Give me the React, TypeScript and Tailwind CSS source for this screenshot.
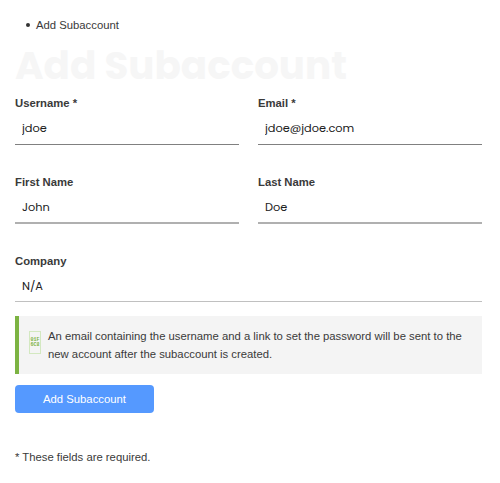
type FieldProps = {
  id: string;
  label: string;
  value: string;
  type?: string;
  className?: string;
};

const inputFont = "font-['Poppins','Inter',sans-serif]";

function Field({ id, label, value, type = "text", className = "" }: FieldProps) {
  return (
    <div>
      <label htmlFor={id} className="block h-[18px] text-[11.3px] leading-[18px] font-bold">
        {label}
      </label>
      <input
        id={id}
        type={type}
        defaultValue={value}
        className={`block w-full rounded-none bg-transparent px-[7px] text-[11.35px] text-[#212121] outline-none ${inputFont} ${className}`}
      />
    </div>
  );
}

// the notice symbol, shown as its code point in a small frame
function NoticeIcon() {
  return (
    <span className="mt-[5px] flex h-[23px] w-3 shrink-0 flex-col items-center justify-center border border-[#d3e8c0] font-['Liberation_Mono',monospace] text-[5px] leading-[5px] font-bold text-[#7cb342]">
      <span>01F</span>
      <span>6C8</span>
    </span>
  );
}

export default function App() {
  return (
    <main className="h-[483px] w-[500px] overflow-hidden bg-white pr-[18px] pl-[15px] font-['Liberation_Sans',Arial,sans-serif] text-[11.3px] leading-[18px] text-[#3a3a3a]">
      <ul className="pt-4">
        <li className="flex items-center pl-[11px]">
          <span className="mr-[6px] h-1 w-1 rounded-full bg-[#333333]" />
          Add Subaccount
        </li>
      </ul>

      <h1 className="mt-1 h-14 text-[38.8px] leading-14 font-bold whitespace-nowrap text-[#f6f6f6] font-['Poppins','Inter',sans-serif]">
        Add Subaccount
      </h1>

      <form>
        <div className="grid grid-cols-2 gap-x-[19px]">
          <Field id="username" label="Username *" value="jdoe" className="h-[33px] border-b border-[#808080]" />
          <Field id="email" label="Email *" value="jdoe@jdoe.com" type="email" className="h-[33px] border-b border-[#808080]" />
        </div>
        <div className="mt-7 grid grid-cols-2 gap-x-[19px]">
          <Field id="first" label="First Name" value="John" className="h-[33px] border-b-2 border-[#b0b0b0] pt-0.5" />
          <Field id="last" label="Last Name" value="Doe" className="h-[33px] border-b-2 border-[#b0b0b0] pt-0.5" />
        </div>
        <div className="mt-7">
          <Field id="company" label="Company" value="N/A" className="h-[32px] border-b border-[#c0c0c0] pt-0.5" />
        </div>

        <div className="mt-[14px] flex h-[58px] border-l-4 border-[#7cb342] bg-[#f4f4f4] pt-[10px] pl-[10px]">
          <NoticeIcon />
          <p className="mt-px ml-[7px] whitespace-nowrap">
            An email containing the username and a link to set the password will be sent to the
            <br />
            new account after the subaccount is created.
          </p>
        </div>

        <button
          type="button"
          className="mt-[11px] block h-7 w-[139px] rounded bg-[#5599ff] pb-px text-white"
        >
          Add Subaccount
        </button>
      </form>

      <p className="mt-[35px]">* These fields are required.</p>
    </main>
  );
}
